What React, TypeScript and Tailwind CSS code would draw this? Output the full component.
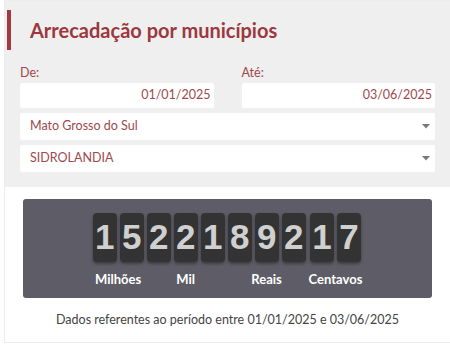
const digits = [
  { label: 'Milhões', values: ['1', '5'] },
  { label: 'Mil', values: ['2', '2', '1'] },
  { label: 'Reais', values: ['8', '9', '2'] },
  { label: 'Centavos', values: ['1', '7'] },
];

const Caret = () => (
  <svg width="8" height="5" viewBox="0 0 8 5">
    <path d="M0 0h8L4 4.5z" fill="#7a7a7a" />
  </svg>
);

const App = () => {
  return (
    <div className="w-[450px] h-[347px] bg-white overflow-hidden font-['Lato','Noto_Sans',sans-serif]">
      <div className="ml-[4px] h-[343px] border border-r-0 border-[#ececec]">
        {/* filtros */}
        <div className="bg-[#efefef] pt-[9px] pb-[15px]">
          <div className="flex items-center pl-[2px]">
            <div className="w-[4px] h-[40px] bg-[#a2393f]"></div>
            <h2 className="ml-[19px] text-[20px] font-bold text-[#9c383d] leading-none">
              Arrecadação por municípios
            </h2>
          </div>

          <div className="px-[15px] mt-[15px]">
            <div className="grid grid-cols-2 gap-[28px]">
              <div>
                <label className="block text-[12.5px] text-[#a0474b] leading-[16px] mb-[2px]">De:</label>
                <div className="h-[25px] bg-white rounded-[2px] flex items-center justify-end px-[3px] text-[12.5px] text-[#9c4a4d]">
                  01/01/2025
                </div>
              </div>
              <div>
                <label className="block text-[12.5px] text-[#a0474b] leading-[16px] mb-[2px]">Até:</label>
                <div className="h-[25px] bg-white rounded-[2px] flex items-center justify-end px-[3px] text-[12.5px] text-[#9c4a4d]">
                  03/06/2025
                </div>
              </div>
            </div>

            <div className="mt-[5px] h-[27px] bg-white rounded-[2px] flex items-center justify-between pl-[10px] pr-[5px] text-[12.5px] text-[#9c4a4d]">
              <span>Mato Grosso do Sul</span>
              <Caret />
            </div>
            <div className="mt-[5px] h-[27px] bg-white rounded-[2px] flex items-center justify-between pl-[10px] pr-[5px] text-[12.5px] text-[#9c4a4d]">
              <span>SIDROLANDIA</span>
              <Caret />
            </div>
          </div>
        </div>

        {/* contador */}
        <div className="mx-[18px] mt-[12px] h-[99px] rounded-[3px] bg-[#5e5d67] flex justify-center pt-[14px]">
          <div className="flex gap-[3px]">
            {digits.map((group) => (
              <div key={group.label} className="flex flex-col items-center">
                <div className="flex gap-[3px]">
                  {group.values.map((d, i) => (
                    <div
                      key={i}
                      className="w-[24px] h-[49px] rounded-[4px] bg-[#333333] shadow-[0_2px_3px_rgba(0,0,0,0.35)] flex items-center justify-center text-[35px] font-bold text-[#d0d0d0] font-['Liberation_Sans',sans-serif]"
                    >
                      {d}
                    </div>
                  ))}
                </div>
                <span className="mt-[8px] text-[13px] font-bold text-white">{group.label}</span>
              </div>
            ))}
          </div>
        </div>

        <p className="mt-[13px] text-center text-[12.5px] text-[#444]">
          Dados referentes ao período entre 01/01/2025 e 03/06/2025
        </p>
      </div>
    </div>
  );
};

export default App;
